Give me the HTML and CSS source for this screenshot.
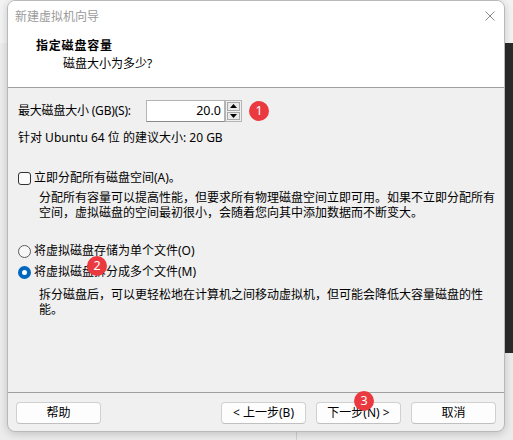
FILE: index.html
```html
<!DOCTYPE html>
<html lang="zh-CN">
<head>
<meta charset="utf-8">
<title>新建虚拟机向导</title>
<link rel="stylesheet" href="styles.css">
</head>
<body>
<div class="desk">
  <div class="desk-strip"></div>
  <div class="desk-line"></div>
  <div class="window">
    <div class="titlebar">
      <span class="title">新建虚拟机向导</span>
      <svg class="close" width="10" height="10" viewBox="0 0 10 10"><path d="M0.5 0.5 L9.5 9.5 M9.5 0.5 L0.5 9.5" stroke="#8a8a8a" stroke-width="1" fill="none"/></svg>
    </div>
    <div class="header">
      <div class="h-title">指定磁盘容量</div>
      <div class="h-sub">磁盘大小为多少?</div>
    </div>
    <div class="body">
      <div class="size-row">
        <span class="size-label">最大磁盘大小 (GB)(S):</span>
        <div class="spin">
          <div class="spin-input">20.0</div>
          <div class="spin-btns">
            <div class="spin-btn"><svg width="7" height="4" viewBox="0 0 7 4"><path d="M3.5 0 L7 4 L0 4 Z" fill="#000"/></svg></div>
            <div class="spin-btn"><svg width="7" height="4" viewBox="0 0 7 4"><path d="M0 0 L7 0 L3.5 4 Z" fill="#000"/></svg></div>
          </div>
        </div>
      </div>
      <div class="hint">针对 Ubuntu 64 位 的建议大小: 20 GB</div>
      <div class="opt check-row">
        <span class="checkbox"></span>
        <span>立即分配所有磁盘空间(A)。</span>
      </div>
      <div class="desc">分配所有容量可以提高性能，但要求所有物理磁盘空间立即可用。如果不立即分配所有<br>空间，虚拟磁盘的空间最初很小，会随着您向其中添加数据而不断变大。</div>
      <div class="opt radio-row1">
        <span class="radio"></span>
        <span>将虚拟磁盘存储为单个文件(O)</span>
      </div>
      <div class="opt radio-row2">
        <span class="radio checked"></span>
        <span>将虚拟磁盘拆分成多个文件(M)</span>
      </div>
      <div class="desc desc2">拆分磁盘后，可以更轻松地在计算机之间移动虚拟机，但可能会降低大容量磁盘的性<br>能。</div>
    </div>
    <div class="footer">
      <button class="btn">帮助</button>
      <div class="spacer"></div>
      <button class="btn">&lt; 上一步(B)</button>
      <button class="btn">下一步(N) &gt;</button>
      <button class="btn">取消</button>
    </div>
    <span class="badge b1">1</span>
    <span class="badge b2">2</span>
    <span class="badge b3">3</span>
  </div>
</div>
</body>
</html>
```
FILE: styles.css
```css
* { box-sizing: border-box; }
html, body { margin: 0; padding: 0; }
body {
  background: #ececec;
  font-family: "Noto Sans", "Noto Sans CJK SC", sans-serif;
  font-size: 12px;
  color: #000;
  width: 513px;
  height: 440px;
  overflow: hidden;
}
.desk {
  position: relative;
  width: 513px;
  height: 440px;
  background: linear-gradient(#f3f3f3 0, #f3f3f3 43px, #ececec 43px);
}
.desk-strip {
  position: absolute;
  left: 505px;
  top: 43px;
  width: 8px;
  height: 310px;
  background: #2b2b2b;
}
.desk-line {
  position: absolute;
  left: 296px;
  top: 0;
  width: 1px;
  height: 440px;
  background: #cfcfcf;
}
.window {
  position: relative;
  margin-left: 7px;
  width: 498px;
  height: 432px;
  border: 1px solid #b9b9b9;
  border-radius: 8px;
  background: #f0f0f0;
  box-shadow: 0 2px 8px rgba(0,0,0,0.18);
  display: flex;
  flex-direction: column;
  overflow: hidden;
}
.titlebar {
  height: 29px;
  background: #fff;
  display: flex;
  align-items: center;
  justify-content: space-between;
  padding: 2px 9px 0 7px;
}
.title { color: #9a9a9a; line-height: 16px; }
.close { display: block; margin-top: -1px; }
.header {
  height: 58px;
  background: #fff;
  border-bottom: 1px solid #a0a0a0;
  padding-top: 8px;
}
.h-title {
  font-weight: bold;
  padding-left: 28px;
  line-height: 16px;
  letter-spacing: 0.8px;
}
.h-sub {
  padding-left: 55px;
  margin-top: 2px;
  line-height: 16px;
}
.body {
  height: 305px;
  border-bottom: 1px solid #a0a0a0;
  padding: 12px 0 0 10px;
}
.size-row {
  display: flex;
  align-items: center;
  height: 22px;
}
.size-label { width: 128px; line-height: 16px; letter-spacing: -0.2px; }
.spin { display: flex; height: 22px; }
.spin-input {
  width: 79px;
  height: 22px;
  background: #fff;
  border: 1px solid #b4b4b4;
  border-bottom-color: #8a8a8a;
  text-align: right;
  padding-right: 3px;
  line-height: 20px;
  font-size: 12.5px;
}
.spin-btns {
  width: 17px;
  height: 22px;
  border: 1px solid #b4b4b4;
  background: #f0f0f0;
  display: flex;
  flex-direction: column;
  padding: 1px;
  gap: 1px;
}
.spin-btn {
  flex: 1;
  border: 1px solid #a8a8a8;
  background: #eaeaea;
  display: flex;
  align-items: center;
  justify-content: center;
}
.spin-btn svg { display: block; }
.hint {
  margin-top: 8px;
  line-height: 16px;
}
.opt {
  display: flex;
  align-items: center;
  gap: 3px;
  line-height: 16px;
  height: 16px;
}
.check-row { margin-top: 24px; }
.checkbox {
  width: 13px;
  height: 13px;
  border: 1px solid #333;
  border-radius: 3px;
  background: #fbfbfb;
}
.desc {
  padding-left: 21px;
  margin-top: 4px;
  line-height: 15px;
}
.radio-row1 { margin-top: 23px; }
.radio-row2 { margin-top: 5px; }
.radio {
  width: 13px;
  height: 13px;
  border: 1px solid #5a5a5a;
  border-radius: 50%;
  background: #f7f7f7;
}
.radio.checked {
  border: 4px solid #0067c0;
  background: #fff;
}
.desc2 { margin-top: 7px; }
.footer {
  flex: 1;
  display: flex;
  align-items: flex-start;
  padding: 9px 8px 0 8px;
  gap: 10px;
}
.spacer { flex: 1; }
.btn {
  width: 85px;
  height: 22px;
  border: 1px solid #d0d0d0;
  border-bottom-color: #c0c0c0;
  border-radius: 4px;
  background: #fdfdfd;
  font-family: "Noto Sans", "Noto Sans CJK SC", sans-serif;
  font-size: 12px;
  color: #000;
  padding: 0;
  line-height: 20px;
}
.badge {
  position: absolute;
  width: 20px;
  height: 20px;
  border-radius: 50%;
  background: #eb3a3f;
  color: #fff;
  font-family: "Noto Sans", sans-serif;
  font-size: 12.5px;
  line-height: 20px;
  text-align: center;
}
.b1 { left: 241px; top: 100px; }
.b2 { left: 79px; top: 255px; }
.b3 { left: 346px; top: 390px; }
```
